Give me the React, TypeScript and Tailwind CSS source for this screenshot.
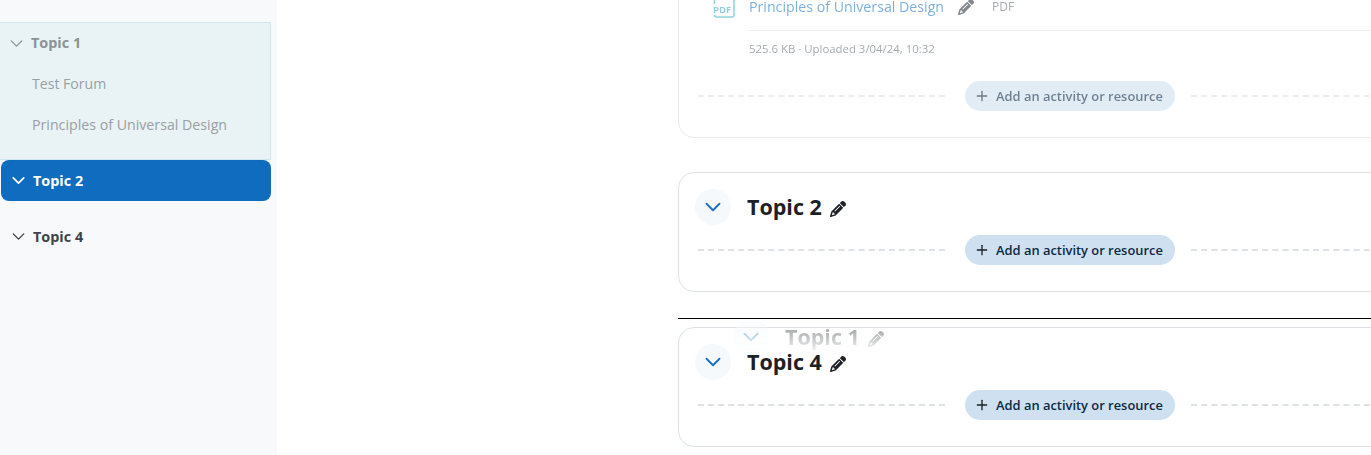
import React from "react";
import { ChevronDown, Plus } from "lucide-react";
import { FaPencil } from "react-icons/fa6";

const AddButton = () => (
  <div className="flex items-center h-[30px]">
    <div className="ml-[19px] w-[247px] border-t-2 border-dashed border-[#dee2e6]" />
    <button className="ml-5 mr-4 flex items-center h-[30px] w-[210px] rounded-full bg-[#cfe1f0] pl-[9px] text-[12.9px] font-semibold text-[#0b2a47]">
      <Plus size={16} strokeWidth={2} className="text-[#1d2125]" />
      <span className="ml-[6px] pt-[2px] whitespace-nowrap">Add an activity or resource</span>
    </button>
    <div className="flex-1 mr-5 border-t-2 border-dashed border-[#dee2e6]" />
  </div>
);

const SectionHead = ({ title }: { title: string }) => (
  <div className="flex items-center h-9 pl-4">
    <div className="flex items-center justify-center w-9 h-9 rounded-full bg-[#f5f9fc]">
      <ChevronDown size={26} strokeWidth={1.7} className="text-[#1a6fc4]" />
    </div>
    <h3 className="ml-4 pb-px text-[21.5px] font-bold text-[#1d2125] leading-9">{title}</h3>
    <FaPencil size={16} className="ml-2 mt-[3px] text-[#1d2125]" />
  </div>
);

const Section = ({ title, className }: { title: string; className: string }) => (
  <section className={`h-[120px] rounded-2xl border border-[#dee2e6] pt-4 ${className}`}>
    <SectionHead title={title} />
    <div className="mt-[10px]">
      <AddButton />
    </div>
  </section>
);

export default function App() {
  return (
    <div className="relative flex h-[455px] w-[1371px] overflow-hidden bg-white font-['Open_Sans',sans-serif]">
      <aside className="w-[277px] shrink-0 bg-[#f8f9fb] pt-[22px] pr-[6px] text-[14.1px]">
        <div className="h-[138px] border border-l-0 border-[#cfe6ec] bg-[#e9f2f4] text-[#8f959e]">
          <div className="flex items-center h-[40px] pl-[6px]">
            <ChevronDown size={21} strokeWidth={1.5} className="text-[#8f959e]" />
            <span className="ml-1 text-[14.4px] font-bold text-[#8c9196]">Topic 1</span>
          </div>
          <div className="pl-[32px] h-[41px] leading-[41px] text-[#9a9fa5]">Test Forum</div>
          <div className="pl-[32px] h-[41px] leading-[41px] text-[14.2px] text-[#9a9fa5]">Principles of Universal Design</div>
        </div>
        <div className="ml-px flex items-center h-[41px] rounded-lg bg-[#0f6cbf] pl-[7px] text-white">
          <ChevronDown size={21} strokeWidth={2} />
          <span className="ml-1 text-[14.4px] font-bold">Topic 2</span>
        </div>
        <div className="mt-[15px] ml-px flex items-center h-[41px] pl-[7px] text-[#3f444a]">
          <ChevronDown size={21} strokeWidth={1.6} />
          <span className="ml-1 text-[14.4px] font-bold">Topic 4</span>
        </div>
      </aside>

      <main className="flex-1 min-w-0 pl-[401px]">
        <div className="w-[784px]">
          {/* section being dragged, scrolled partly off the top */}
          <section className="-mt-[40px] h-[178px] rounded-2xl border border-[#e9ebee] pt-[35px]">
            <div className="opacity-60">
              <div className="flex pl-[34px]">
                <svg width="24" height="26" viewBox="0 0 24 26" fill="none" className="-mt-1 shrink-0">
                  <path d="M1.5 2h19.500v21a2 2 0 0 1-2 2H3.500a2 2 0 0 1-2-2V2z" stroke="#45b5c4" strokeWidth="1.5" />
                  <rect x="0" y="12" width="17" height="11" fill="#fff" />
                  <text x="0" y="21" fontSize="9.5" fontWeight="700" fill="#45b5c4" fontFamily="'Open Sans',sans-serif">PDF</text>
                </svg>
                <div className="ml-3 flex-1">
                  <div className="flex items-center h-[22px] text-[14.2px] leading-[14px]">
                    <span className="text-[#0f6cbf] opacity-90">Principles of Universal Design</span>
                    <FaPencil size={16} className="ml-[14px] text-[#343a40]" />
                    <span className="ml-[18px] text-[12px] leading-[14px] text-[#6a737b]">PDF</span>
                  </div>
                  <div className="mt-3 border-t border-[#dee2e6]" />
                  <div className="mt-[10px] text-[11.4px] leading-4 text-[#6a737b]">525.6 KB · Uploaded 3/04/24, 10:32</div>
                </div>
              </div>
              <div className="mt-6">
                <AddButton />
              </div>
            </div>
          </section>

          <Section title="Topic 2" className="mt-[34px]" />
          <div className="mt-[26px] border-t border-black -mr-10" />
          <Section title="Topic 4" className="mt-2" />
        </div>
      </main>

      {/* drag ghost */}
      <div className="absolute left-[717px] top-[319px] opacity-35 [mask-image:linear-gradient(to_bottom,black_35%,transparent_100%)]">
        <SectionHead title="Topic 1" />
      </div>
    </div>
  );
}
